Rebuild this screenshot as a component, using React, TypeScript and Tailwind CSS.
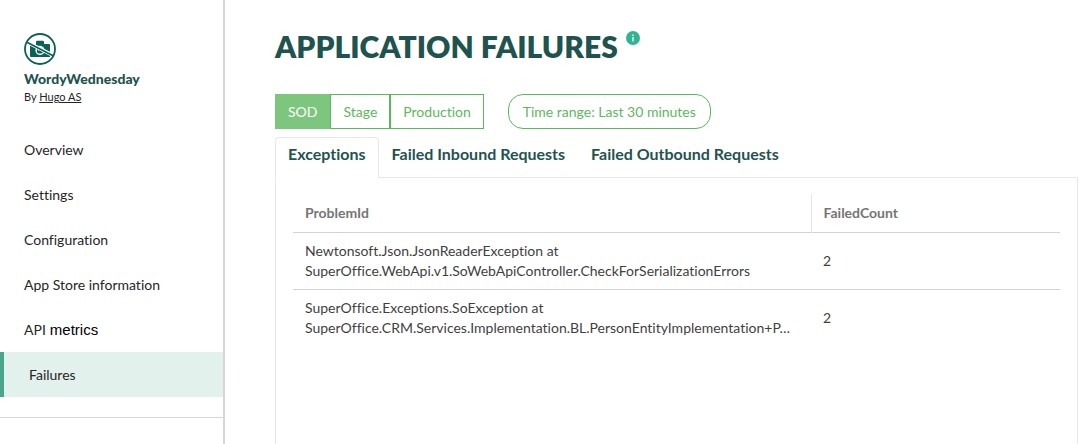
import { useState } from "react";

const navItems = ["Overview", "Settings", "Configuration", "App Store information"];
const environments = ["SOD", "Stage", "Production"];
const tabs = ["Exceptions", "Failed Inbound Requests", "Failed Outbound Requests"];
const failures = [
  {
    source: "Newtonsoft.Json.JsonReaderException at",
    method: "SuperOffice.WebApi.v1.SoWebApiController.CheckForSerializationErrors",
    count: 2,
  },
  {
    source: "SuperOffice.Exceptions.SoException at",
    method: "SuperOffice.CRM.Services.Implementation.BL.PersonEntityImplementation+P…",
    count: 2,
  },
];

function NoImageLogo() {
  return (
    <svg viewBox="0 0 32 32" className="size-8" aria-hidden="true">
      <path
        d="M6 12.3h6V9q0-1.2 1.2-1.2h5.6Q20 7.8 20 9v2h5q1 0 1 1v12H7q-1 0-1-1z"
        fill="#0b6155"
      />
      <circle cx="16" cy="17.4" r="4.6" fill="#fff" />
      <circle cx="16" cy="17.4" r="3.2" fill="#0b6155" />
      <path d="M14.4 17.6q.2-1.6 1.8-1.8" fill="none" stroke="#fff" strokeWidth="1" />
      <path d="M2 8.6 30 22.8" stroke="#fff" strokeWidth="3.6" />
      <path d="M2.4 8.9 29.6 22.9" stroke="#0b6155" strokeWidth="1.7" />
      <circle cx="16" cy="16" r="15" fill="none" stroke="#0b6155" strokeWidth="1.8" />
    </svg>
  );
}

function Sidebar() {
  return (
    <aside className="w-[225px] shrink-0 border-r-2 border-[#d6d6d6] pt-[33px] text-[#262626]">
      <div className="px-6">
        <NoImageLogo />
        <h2 className="mt-1 text-sm leading-5 font-black text-[#1f534f]">WordyWednesday</h2>
        <p className="text-[11px] leading-4">
          By{" "}
          <a href="#vendor" className="underline">
            Hugo AS
          </a>
        </p>
      </div>
      <nav className="mt-[22px] border-b border-[#d6d6d6] pb-5 text-sm">
        {navItems.map((item) => (
          <a key={item} href="#section" className="flex h-[45px] items-center px-6">
            {item}
          </a>
        ))}
        <a href="#metrics" className="flex h-[45px] items-center gap-1 px-6">
          API{" "}
          <span className="font-['Liberation_Sans',Arial,sans-serif] text-[15px] text-black">
            metrics
          </span>
        </a>
        <a
          href="#failures"
          aria-current="page"
          className="flex h-[45px] items-center border-l-4 border-[#49a68c] bg-[#e3f1ec] px-[25px]"
        >
          Failures
        </a>
      </nav>
    </aside>
  );
}

export default function App() {
  const [environment, setEnvironment] = useState("SOD");
  const [tab, setTab] = useState("Exceptions");

  return (
    <div className="flex min-h-screen bg-white font-[Lato,sans-serif] [font-variant-ligatures:none]">
      <Sidebar />
      <main className="flex min-w-0 flex-1 flex-col pr-[5px] pl-[50px]">
        <header className="flex items-start gap-2 pt-[26px]">
          <h1 className="text-[30px] leading-10 font-extrabold text-[#1f534f]">
            APPLICATION FAILURES
          </h1>
          <button
            type="button"
            aria-label="About application failures"
            className="mt-[5px] flex size-3.5 items-center justify-center rounded-full bg-[#31b394]"
          >
            <svg viewBox="0 0 14 14" className="size-3.5" aria-hidden="true">
              <path d="M7 3.6v1.3M7 6v4.4" stroke="#fff" strokeWidth="1.3" />
            </svg>
          </button>
        </header>

        <div className="mt-7 flex gap-6 text-sm text-[#5cb85c]">
          <div className="flex" role="group" aria-label="Environment">
            {environments.map((name) => (
              <button
                key={name}
                type="button"
                aria-pressed={environment === name}
                onClick={() => setEnvironment(name)}
                className={`h-[35px] border px-3 ${
                  environment === name
                    ? "border-[#7dc67d] bg-[#7dc67d] text-white"
                    : "border-[#5cb85c]"
                }`}
              >
                {name}
              </button>
            ))}
          </div>
          <button type="button" className="h-[35px] rounded-[15px] border border-[#5cb85c] px-3.5">
            Time range: Last 30 minutes
          </button>
        </div>

        <div
          role="tablist"
          className="relative z-10 mt-2 -mb-px flex text-base font-bold text-[#1f534f]"
        >
          {tabs.map((name) => (
            <button
              key={name}
              type="button"
              role="tab"
              aria-selected={tab === name}
              onClick={() => setTab(name)}
              className={`h-[41px] rounded-t border px-3 pb-2 ${
                tab === name ? "border-[#e7e7e7] border-b-white bg-white" : "border-transparent"
              }`}
            >
              {name}
            </button>
          ))}
        </div>

        <section className="flex-1 border border-b-0 border-[#e7e7e7] px-[17px] pt-4">
          <table className="w-full table-fixed text-left text-sm text-[#3f3f3f]">
            <colgroup>
              <col className="w-[518px]" />
              <col />
            </colgroup>
            <thead>
              <tr className="h-[38px] border-b border-[#d3d3d3] text-[#757575]">
                <th className="px-3 font-bold">ProblemId</th>
                <th className="border-l border-[#e7e7e7] px-3 font-bold">FailedCount</th>
              </tr>
            </thead>
            <tbody>
              {failures.map((failure) => (
                <tr
                  key={failure.source}
                  className="h-[57px] border-b border-[#d3d3d3] last:border-b-0"
                >
                  <td className="px-3 leading-5">
                    <div>{failure.source}</div>
                    <div className="truncate">{failure.method}</div>
                  </td>
                  <td className="px-3">{failure.count}</td>
                </tr>
              ))}
            </tbody>
          </table>
        </section>
      </main>
    </div>
  );
}
